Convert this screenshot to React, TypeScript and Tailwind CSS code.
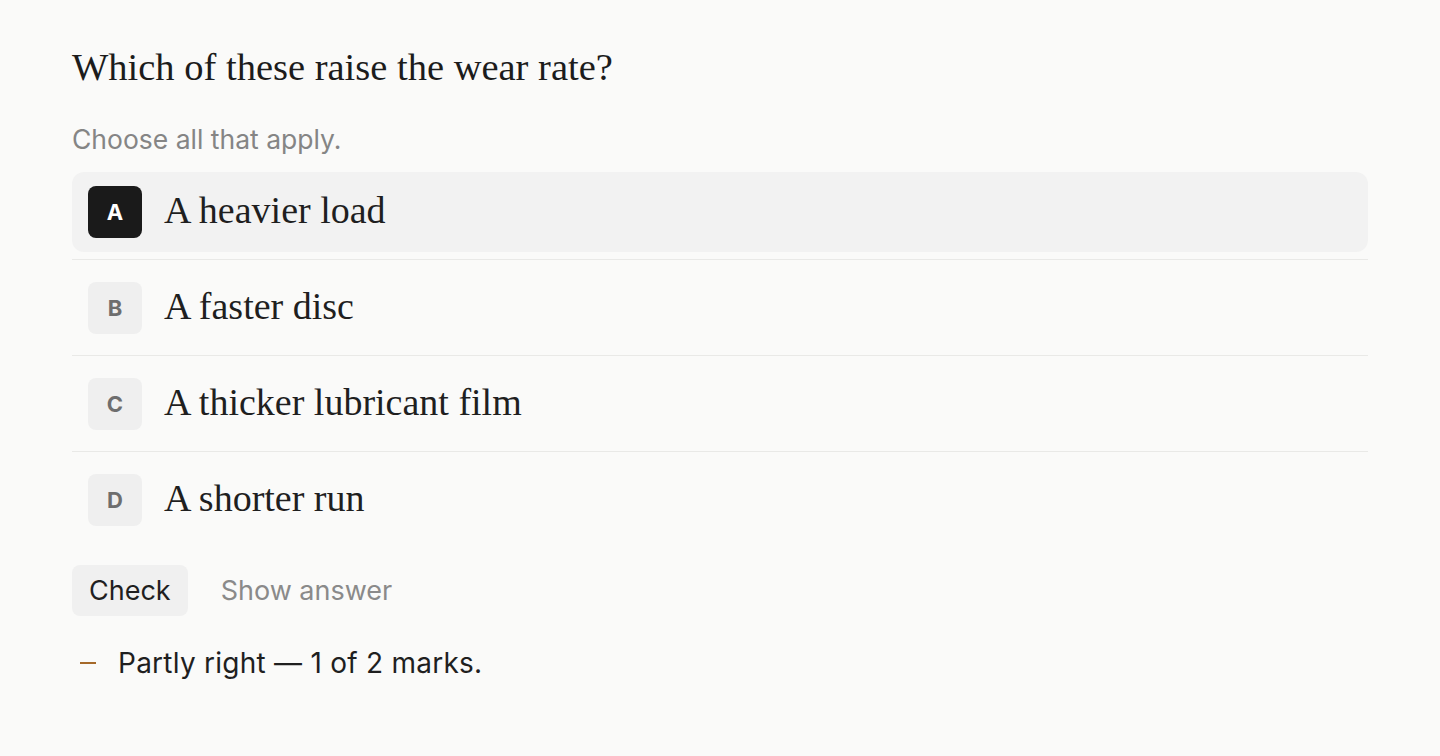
import { useState } from 'react';

const OPTIONS = [
  { id: 'A', text: 'A heavier load' },
  { id: 'B', text: 'A faster disc' },
  { id: 'C', text: 'A thicker lubricant film' },
  { id: 'D', text: 'A shorter run' },
];

const SERIF = "font-['Liberation_Serif',serif]";
const SANS = "font-['Inter',sans-serif]";

export default function App() {
  const [selected, setSelected] = useState<string[]>(['A']);

  const toggle = (id: string) =>
    setSelected((s) => (s.includes(id) ? s.filter((x) => x !== id) : [...s, id]));

  return (
    <div className="min-h-screen bg-[#fafaf9] px-[72px] pt-[43px]">
      {/* Question */}
      <h1 className={`${SERIF} text-[38.5px] leading-[48px] text-[#1c1c1c]`}>
        Which of these raise the wear rate?
      </h1>
      <p className={`${SANS} mt-[30px] text-[26.5px] leading-[36px] text-[#858585]`}>
        Choose all that apply.
      </p>

      {/* Options */}
      <ul className="mt-[15px] flex flex-col">
        {OPTIONS.map((option, i) => {
          const isOn = selected.includes(option.id);
          const isLast = i === OPTIONS.length - 1;
          return (
            <li
              key={option.id}
              className={isLast ? '' : 'mb-2 border-b border-[#e9e9e7] pb-[7px]'}
            >
              <button
                type="button"
                onClick={() => toggle(option.id)}
                className={`flex h-20 w-full items-center gap-[22px] rounded-xl pl-4 text-left ${
                  isOn ? 'bg-[#f2f2f2]' : 'bg-transparent'
                }`}
              >
                <span
                  className={`${SANS} flex h-[52px] w-[54px] items-center justify-center rounded-lg text-[22px] font-bold ${
                    isOn ? 'bg-[#1a1a1a] text-white' : 'bg-[#efefef] text-[#6e6e6e]'
                  }`}
                >
                  {option.id}
                </span>
                <span className={`${SERIF} pb-[5px] text-[38px] leading-[48px] text-[#1f1f1f]`}>
                  {option.text}
                </span>
              </button>
            </li>
          );
        })}
      </ul>

      {/* Actions */}
      <div className={`${SANS} mt-[25px] flex items-center gap-[33px] text-[27px] leading-[36px]`}>
        <button type="button" className="flex h-[51px] items-center rounded-lg bg-[#f0f0f0] px-[17px] text-[#1f1f1f]">
          Check
        </button>
        <button type="button" className="text-[#8a8a8a]">
          Show answer
        </button>
      </div>

      {/* Feedback */}
      <div className={`${SANS} mt-[29px] flex items-center text-[28px] leading-[36px] tracking-[0.25px] text-[#1f1f1f]`}>
        <span className="ml-2 mr-[22px] h-[2px] w-4 bg-[#a5692a]" />
        <span>Partly right — 1 of 2 marks.</span>
      </div>
    </div>
  );
}
